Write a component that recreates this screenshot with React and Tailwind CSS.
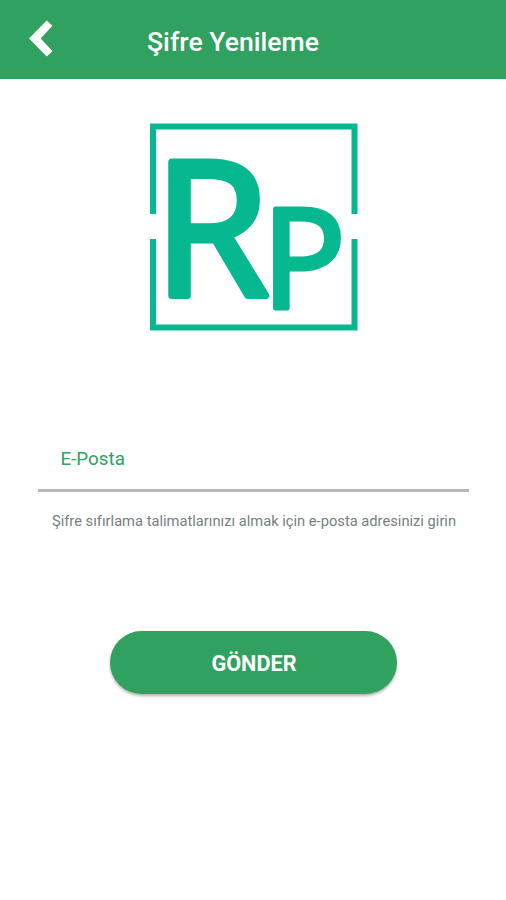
import React, { useState } from 'react'

const Logo = () => (
  <svg viewBox="0 0 208 208" className="ml-px h-[208px] w-[208px] overflow-visible" role="img" aria-label="RP">
    <path d="M3 91V3.5H204.5V91M3 116V204.5H204.5V116" fill="none" stroke="#06b88f" strokeWidth="6" />
    <g fill="#06b88f" stroke="#06b88f" strokeLinejoin="round" className="font-['Open_Sans',sans-serif] font-[370]">
      <text x="3.5" y="172.5" fontSize="187" strokeWidth="7">R</text>
      <text x="112" y="185" fontSize="139" strokeWidth="5">P</text>
    </g>
  </svg>
)

export default function App() {
  const [email, setEmail] = useState('')

  return (
    <div className="flex h-[900px] w-full flex-col bg-white font-[Roboto,sans-serif]">
      <header className="flex h-[79px] items-center bg-[#30a15f] pl-7">
        <button type="button" aria-label="Geri" className="w-[25px]">
          <svg viewBox="0 0 25 37" className="mb-0.5 h-[37px] w-[25px]">
            <path d="M18.7 0.5L24.5 5.7L12.7 18.5L24.5 31.3L18.7 36.5L1 18.5Z" fill="#fff" />
          </svg>
        </button>
        <h1 className="ml-[94px] mt-1 text-[26.6px] font-medium leading-8 text-white">Şifre Yenileme</h1>
      </header>

      <main className="flex flex-col items-center pt-11">
        <Logo />

        <form className="mt-[113px] flex w-full flex-col items-center" onSubmit={(e) => e.preventDefault()}>
          <div className="w-[431px] border-b-[3px] border-[#b5b8ba] pb-4 pl-[23px] pt-px">
            <input
              type="text"
              value={email}
              onChange={(e) => setEmail(e.target.value)}
              placeholder="E-Posta"
              className="block h-7 w-full bg-transparent text-[18.8px] text-[#30a15f] outline-none placeholder:text-[#30a15f] placeholder:opacity-100"
            />
          </div>
          <p className="mt-[17px] whitespace-nowrap pl-0.5 text-[14.7px] leading-6 text-[#75807f]">
            Şifre sıfırlama talimatlarınızı almak için e-posta adresinizi girin
          </p>
          <button
            type="submit"
            className="mt-[98px] h-[63px] w-[287px] rounded-full bg-[#30a15f] pl-0.5 pt-1 text-[21.7px] font-bold text-white shadow-[0_2px_3px_rgba(0,0,0,0.3)]"
          >
            GÖNDER
          </button>
        </form>
      </main>
    </div>
  )
}
